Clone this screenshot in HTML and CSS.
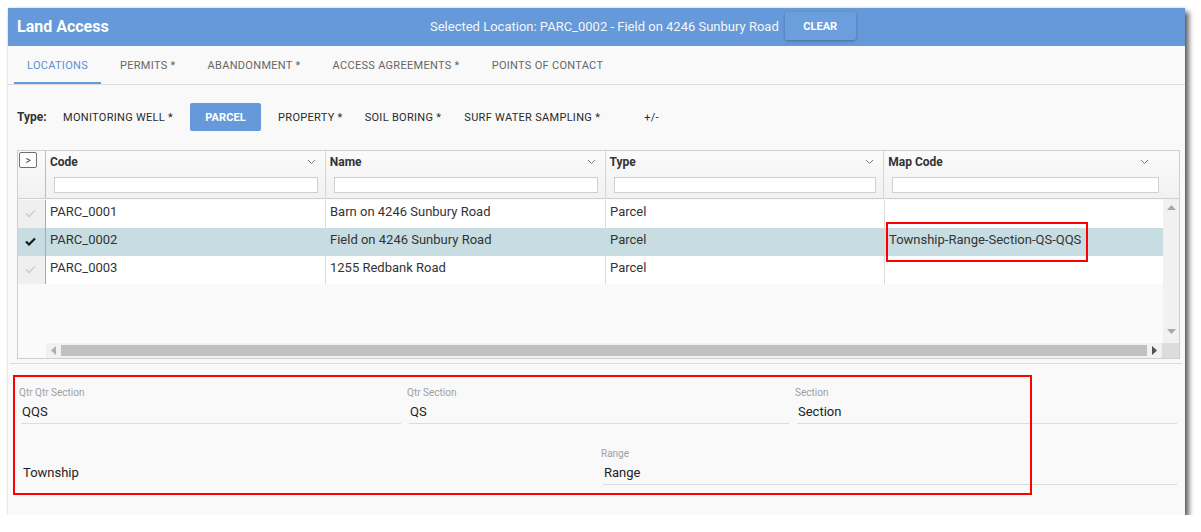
FILE: index.html
```html
<!DOCTYPE html>
<html>
<head>
<meta charset="utf-8">
<link rel="stylesheet" href="styles.css">
</head>
<body>
<div class="panel">
  <header class="appbar">
    <div class="title">Land Access</div>
    <div class="selection">
      <span class="sel-text">Selected Location: PARC_0002 - Field on 4246 Sunbury Road</span>
      <button class="clear">CLEAR</button>
    </div>
  </header>
  <nav class="tabs">
    <div class="tab active">LOCATIONS</div>
    <div class="tab">PERMITS *</div>
    <div class="tab">ABANDONMENT *</div>
    <div class="tab">ACCESS AGREEMENTS *</div>
    <div class="tab">POINTS OF CONTACT</div>
  </nav>
  <div class="typebar">
    <span class="tlabel">Type:</span>
    <span class="tbtn b-mw">MONITORING WELL *</span>
    <span class="tbtn on">PARCEL</span>
    <span class="tbtn b-prop">PROPERTY *</span>
    <span class="tbtn b-soil">SOIL BORING *</span>
    <span class="tbtn b-surf">SURF WATER SAMPLING *</span>
    <span class="tbtn b-pm">+/-</span>
  </div>
  <div class="grid">
    <div class="ghead">
      <div class="hsel"><span class="expand">&gt;</span></div>
      <div class="hcol w-code">
        <div class="htop"><span>Code</span><svg class="chev" width="9" height="6" viewBox="0 0 9 6"><polyline points="1,1 4.5,4.5 8,1" fill="none" stroke="#777" stroke-width="1"/></svg></div>
        <div class="filter"></div>
      </div>
      <div class="hcol w-name">
        <div class="htop"><span>Name</span><svg class="chev" width="9" height="6" viewBox="0 0 9 6"><polyline points="1,1 4.5,4.5 8,1" fill="none" stroke="#777" stroke-width="1"/></svg></div>
        <div class="filter"></div>
      </div>
      <div class="hcol w-type">
        <div class="htop"><span>Type</span><svg class="chev" width="9" height="6" viewBox="0 0 9 6"><polyline points="1,1 4.5,4.5 8,1" fill="none" stroke="#777" stroke-width="1"/></svg></div>
        <div class="filter"></div>
      </div>
      <div class="hcol w-maph">
        <div class="htop map"><span>Map Code</span><svg class="chev" width="9" height="6" viewBox="0 0 9 6"><polyline points="1,1 4.5,4.5 8,1" fill="none" stroke="#777" stroke-width="1"/></svg></div>
        <div class="filter map"></div>
      </div>
    </div>
    <div class="gbody">
      <div class="rows">
        <div class="row">
          <div class="csel"><svg width="11" height="9" viewBox="0 0 11 9"><polyline points="1,4.5 4,7.5 10,1.5" fill="none" stroke="#cfcfcf" stroke-width="1.6"/></svg></div>
          <div class="cell w-code">PARC_0001</div>
          <div class="cell w-name">Barn on 4246 Sunbury Road</div>
          <div class="cell w-type">Parcel</div>
          <div class="cell w-map"></div>
        </div>
        <div class="row selected">
          <div class="csel"><svg width="11" height="9" viewBox="0 0 11 9"><polyline points="1,4.5 4,7.5 10,1.5" fill="none" stroke="#1a1a1a" stroke-width="2.2"/></svg></div>
          <div class="cell w-code">PARC_0002</div>
          <div class="cell w-name">Field on 4246 Sunbury Road</div>
          <div class="cell w-type">Parcel</div>
          <div class="cell w-map">Township-Range-Section-QS-QQS</div>
        </div>
        <div class="row">
          <div class="csel"><svg width="11" height="9" viewBox="0 0 11 9"><polyline points="1,4.5 4,7.5 10,1.5" fill="none" stroke="#cfcfcf" stroke-width="1.6"/></svg></div>
          <div class="cell w-code">PARC_0003</div>
          <div class="cell w-name">1255 Redbank Road</div>
          <div class="cell w-type">Parcel</div>
          <div class="cell w-map"></div>
        </div>
      </div>
      <div class="vscroll">
        <svg width="9" height="5" viewBox="0 0 9 5"><polygon points="0,5 4.5,0 9,5" fill="#a8a8a8"/></svg>
        <svg width="9" height="5" viewBox="0 0 9 5"><polygon points="0,0 9,0 4.5,5" fill="#a8a8a8"/></svg>
      </div>
    </div>
    <div class="hrow">
      <div class="hspacer"></div>
      <div class="hscroll">
        <svg class="arrow" width="5" height="9" viewBox="0 0 5 9"><polygon points="5,0 5,9 0,4.5" fill="#b0b0b0"/></svg>
        <div class="thumb"></div>
        <svg class="arrow" width="5" height="9" viewBox="0 0 5 9"><polygon points="0,0 0,9 5,4.5" fill="#505050"/></svg>
      </div>
      <div class="corner"></div>
    </div>
  </div>
  <div class="sep"></div>
  <div class="form">
    <div class="frow three">
      <div class="field"><div class="flabel">Qtr Qtr Section</div><div class="fvalue">QQS</div></div>
      <div class="field"><div class="flabel">Qtr Section</div><div class="fvalue">QS</div></div>
      <div class="field"><div class="flabel">Section</div><div class="fvalue">Section</div></div>
    </div>
    <div class="frow two">
      <div class="field plain"><div class="flabel"></div><div class="fvalue">Township</div></div>
      <div class="field"><div class="flabel">Range</div><div class="fvalue">Range</div></div>
    </div>
  </div>
  <div class="mark mark-map"></div>
  <div class="mark mark-form"></div>
</div>
</body>
</html>
```

FILE: styles.css
```css
* { box-sizing: border-box; }
html, body { margin: 0; padding: 0; background: #fff; }
body { font-family: Roboto, "Noto Sans", Arial, sans-serif; color: #333; }

.panel {
  position: relative;
  margin: 8px 0 0 8px;
  width: 1177px;
  height: 507px;
  background: #f9f9f9;
  box-shadow: 0 0 2px rgba(0,0,0,0.18), 4px 4px 5px rgba(0,0,0,0.6);
}

.appbar {
  height: 38px;
  background: #6699d9;
  display: flex;
  align-items: center;
  padding-left: 9px;
}
.title { font-size: 16px; font-weight: 700; color: #fff; width: 100px; margin-top: -2px; }
.selection { display: flex; align-items: center; margin-left: 313px; }
.sel-text { font-size: 13px; color: #f2f6fc; margin-top: -1px; }
.clear {
  margin-left: 6px;
  width: 71px; height: 28px;
  border: none; border-radius: 2px;
  background: #6b9edc;
  box-shadow: 0 1px 3px rgba(0,0,0,0.3);
  color: #fff; font-family: inherit; font-size: 11px; font-weight: 700;
  margin-top: -2px;
}

.tabs {
  height: 39px;
  border-bottom: 1px solid #dcdcdc;
  display: flex;
  padding-left: 6px;
}
.tab {
  height: 38px;
  display: flex; align-items: center;
  padding: 0 13px;
  margin-right: 6px;
  font-size: 11px;
  color: #666;
  letter-spacing: 0.3px;
}
.tab.active { color: #5a90d6; border-bottom: 2px solid #6699d9; padding-top: 2px; }

.typebar {
  margin-top: 18px;
  height: 28px;
  display: flex; align-items: center;
  padding-left: 9px;
}
.tlabel { width: 46px; font-size: 12px; font-weight: 700; color: #333; }
.tbtn { font-size: 11px; color: #2a2a2a; letter-spacing: 0.3px; }
.tbtn.on {
  height: 28px; width: 71px;
  display: flex; align-items: center; justify-content: center;
  background: #6699d9; color: #fff; font-weight: 700; border-radius: 2px;
  margin-left: 17px;
  letter-spacing: 0.1px;
}
.b-mw { margin-left: 0; }
.b-prop { margin-left: 17px; }
.b-soil { margin-left: 22px; }
.b-surf { margin-left: 23px; }
.b-pm { margin-left: 44px; }

.grid {
  margin: 19px 0 0 9px;
  width: 1163px;
  height: 209px;
  border: 1px solid #cfcfcf;
  background: #fafafa;
  display: flex; flex-direction: column;
}
.ghead {
  height: 48px;
  border-bottom: 1px solid #cfcfcf;
  display: flex;
  background: linear-gradient(#fbfbfb, #f1f1f1);
}
.hsel { width: 28px; border-right: 1px solid #bdbdbd; padding: 1px 0 0 1px; }
.expand {
  display: flex; align-items: center; justify-content: center;
  width: 18px; height: 16px;
  border: 1px solid #707070; border-radius: 2px;
  background: #fff; font-size: 10px; color: #333;
}
.hcol { border-right: 1px solid #d6d6d6; padding: 0 7px 0 4px; }
.htop { height: 22px; display: flex; align-items: center; justify-content: space-between; font-size: 12px; font-weight: 700; color: #333; padding-right: 2px; }
.htop.map { padding-right: 23px; }
.filter { margin: 4px 0 0 4px; height: 16px; border: 1px solid #d0d0d0; background: #fff; }
.filter.map { margin-right: 13px; }

.w-code { width: 280px; }
.w-name { width: 280px; }
.w-type { width: 279px; }
.w-map { width: 278px; }
.w-maph { width: 295px; border-right: none; }

.gbody { height: 144px; display: flex; padding-top: 1px; }
.rows { width: 1145px; }
.row { height: 28px; display: flex; background: #fff; }
.row.selected { background: #c8dde1; }
.csel {
  width: 28px; border-right: 1px solid #a9a9a9; background: #efefef;
  display: flex; align-items: center; justify-content: center;
  padding: 0 2px 2px 0;
}
.row.selected .csel { background: #c8dde1; }
.cell {
  border-right: 1px solid #dadada;
  padding: 0 0 5px 4px;
  display: flex; align-items: center;
  font-size: 13px; color: #333;
}
.cell.w-map { border-right: none; }
.vscroll {
  width: 17px; margin-top: -1px; background: #f1f1f1;
  display: flex; flex-direction: column; justify-content: space-between; align-items: center;
  padding: 6px 0 9px;
}
.hrow { height: 15px; display: flex; }
.hspacer { width: 28px; }
.hscroll { width: 1117px; background: #f1f1f1; display: flex; align-items: center; padding: 0 5px 0 5px; }
.hscroll .arrow { flex: none; }
.thumb { flex: 1; height: 11px; background: #c1c1c1; margin: 0 5px 0 5px; }
.corner { width: 17px; background: #dcdcdc; }

.sep { margin: 4px 3px 0 2px; border-top: 1px solid #dcdcdc; }

.form { padding: 22px 8px 0 13px; }
.frow { display: grid; gap: 8px; }
.frow.three { grid-template-columns: 1fr 1fr 1fr; }
.frow.two { grid-template-columns: 1fr 1fr; margin-top: 23px; }
.field { border-bottom: 1px solid #dcdcdc; height: 38px; }
.field.plain { border-bottom: none; }
.flabel { height: 14px; font-size: 10px; color: #a0a0a0; margin-left: -2px; line-height: 14px; }
.fvalue { height: 22px; line-height: 24px; font-size: 13px; color: #222; padding-left: 1px; }
.field.plain .fvalue { padding-left: 2px; }

.mark { position: absolute; border: 2px solid #ff0000; }
.mark-map { left: 878px; top: 214px; width: 202px; height: 40px; }
.mark-form { left: 5px; top: 367px; width: 1019px; height: 120px; }
```
